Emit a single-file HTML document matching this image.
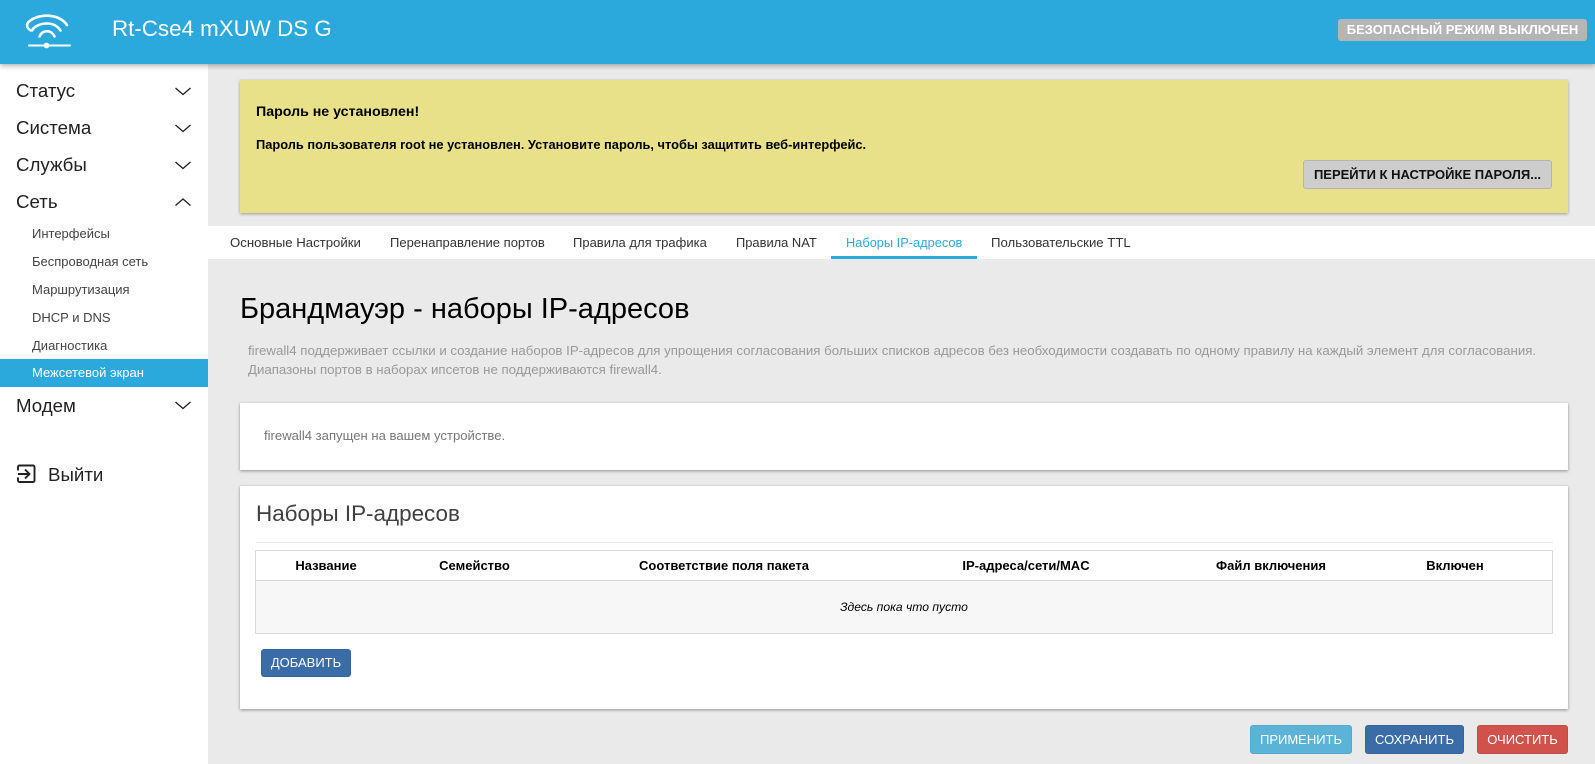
<!DOCTYPE html>
<html lang="ru"><head><meta charset="utf-8"><title>Брандмауэр</title>
<style>
*{box-sizing:border-box}
html,body{margin:0;padding:0}
body{width:1595px;height:764px;overflow:hidden;position:relative;background:#eaeaea;font-family:"Liberation Sans",Arial,sans-serif;color:#000}
.a{position:absolute;white-space:nowrap}
.c{transform:translateX(-50%)}
#hd{left:0;top:0;width:1595px;height:64px;background:#2ca9dc;box-shadow:0 2px 5px rgba(0,0,0,.3);z-index:3}
#sb{left:0;top:64px;width:208px;height:700px;background:#fff;z-index:1}
.m{left:16px;font-size:18.7px;line-height:22px;color:#222}
.s{left:32px;font-size:13px;line-height:18px;color:#444}
.card{background:#fff;box-shadow:0 1px 3px rgba(0,0,0,.4)}
.th{top:558px;font-size:13px;line-height:16px;font-weight:bold}
.b{border-radius:3px;font-size:13px;text-align:center;color:#fff;border:1px solid rgba(0,0,0,.06)}
.t{top:234px;font-size:13px;line-height:18px;color:#333}
</style></head><body>
<div id="hd" class="a"></div>
<svg class="a" style="left:24px;top:12px;z-index:4" width="48" height="38" viewBox="0 0 48 38" fill="none" stroke="#fff" stroke-linecap="round" stroke-linejoin="round">
<path d="M43 13C39 7 31 3.700 23 3.700C14 3.700 6.500 7 3.300 11.500C2.300 15 5 18.500 8 18.500C10.500 14 16.500 11.500 23 11.500C29 11.500 33.500 14 36.500 18.500" stroke-width="2.600"/>
<path d="M15.500 24.500C17 21 20 19.300 23 19.300C26 19.300 29 21 30.500 24.500" stroke-width="2.500"/>
<path d="M5 33.500H46" stroke-width="2"/>
<circle cx="22.500" cy="33.500" r="2.900" fill="#fff" stroke="none"/>
</svg>
<div class="a" style="left:112px;top:16px;font-size:22.350px;line-height:26px;color:#fff;z-index:4">Rt-Cse4 mXUW DS G</div>
<div class="a" style="left:1338px;top:19px;width:249px;height:22px;background:#b5b5b5;border-radius:3px;color:#fff;font-size:13px;font-weight:bold;line-height:22px;text-align:center;z-index:4">БЕЗОПАСНЫЙ РЕЖИМ ВЫКЛЮЧЕН</div>

<div id="sb" class="a"></div>
<div style="position:absolute;left:0;top:0;z-index:2">
<div class="a m" style="top:80px">Статус</div>
<div class="a m" style="top:117px">Система</div>
<div class="a m" style="top:154px">Службы</div>
<div class="a m" style="top:191px">Сеть</div>
<div class="a s" style="top:225px">Интерфейсы</div>
<div class="a s" style="top:253px">Беспроводная сеть</div>
<div class="a s" style="top:281px">Маршрутизация</div>
<div class="a s" style="top:309px">DHCP и DNS</div>
<div class="a s" style="top:337px">Диагностика</div>
<div class="a" style="left:0;top:359px;width:208px;height:28px;background:#2ca9dc"></div>
<div class="a s" style="top:364px;color:#fff">Межсетевой экран</div>
<div class="a m" style="top:395px">Модем</div>
<div class="a m" style="top:464px;left:48px">Выйти</div>
<svg class="a" style="left:0;top:0" width="208" height="500" fill="none" stroke="#222" stroke-width="1.300">
<path d="M175.500 88L183 94.500L190.500 88M175.500 125L183 131.500L190.500 125M175.500 162L183 168.500L190.500 162M175.500 205.500L183 199L190.500 205.500M175.500 402L183 408.500L190.500 402"/>
<path d="M18 470.500V467a1.500 1.500 0 0 1 1.500-1.500H33a1.500 1.500 0 0 1 1.500 1.500V480.500a1.500 1.500 0 0 1-1.500 1.500H19.500A1.500 1.500 0 0 1 18 480.500V477.500M18 474H29M25 469.500L29.500 474L25 478.500" stroke-width="1.900"/>
</svg>
</div>

<div class="a" style="left:240px;top:80px;width:1328px;height:133px;background:#e9e18a;box-shadow:0 1px 3px rgba(0,0,0,.35)"></div>
<div class="a" style="left:256px;top:103px;font-size:14.200px;line-height:18px;font-weight:bold">Пароль не установлен!</div>
<div class="a" style="left:256px;top:136px;font-size:12.850px;line-height:18px;font-weight:bold">Пароль пользователя root не установлен. Установите пароль, чтобы защитить веб-интерфейс.</div>
<div class="a b" style="left:1303px;top:160px;width:249px;height:29px;background:#cdcdcd;color:#111;font-weight:bold;line-height:27px;border-color:#b4b4b4">ПЕРЕЙТИ К НАСТРОЙКЕ ПАРОЛЯ...</div>

<div class="a" style="left:208px;top:226px;width:1387px;height:33px;background:#fff"></div>
<div class="a t" style="left:230px;font-size:13.200px">Основные Настройки</div>
<div class="a t" style="left:390px">Перенаправление портов</div>
<div class="a t" style="left:573px">Правила для трафика</div>
<div class="a t" style="left:736px;font-size:12.900px">Правила NAT</div>
<div class="a t" style="left:846px;font-size:12.800px;color:#2ca9dc">Наборы IP-адресов</div>
<div class="a" style="left:831px;top:256px;width:146px;height:3px;background:#2ca9dc"></div>
<div class="a t" style="left:991px;font-size:13.200px">Пользовательские TTL</div>

<div class="a" style="left:240px;top:292px;font-size:29px;line-height:34px">Брандмауэр - наборы IP-адресов</div>
<div class="a" style="left:248px;top:341px;font-size:13.250px;line-height:19px;color:#999">firewall4 поддерживает ссылки и создание наборов IP-адресов для упрощения согласования больших списков адресов без необходимости создавать по одному правилу на каждый элемент для согласования.<br>Диапазоны портов в наборах ипсетов не поддерживаются firewall4.</div>

<div class="a card" style="left:240px;top:403px;width:1328px;height:67px"></div>
<div class="a" style="left:264px;top:427px;font-size:13.100px;line-height:18px;color:#777">firewall4 запущен на вашем устройстве.</div>

<div class="a card" style="left:240px;top:486px;width:1328px;height:223px"></div>
<div class="a" style="left:256px;top:500px;font-size:22.450px;line-height:27px;color:#404040">Наборы IP-адресов</div>
<div class="a" style="left:256px;top:542px;width:1297px;height:1px;background:#e8e8e8"></div>
<div class="a" style="left:255px;top:550px;width:1298px;height:84px;border:1px solid #d9d9d9;background:#fff"></div>
<div class="a" style="left:256px;top:580px;width:1296px;height:53px;background:#f7f7f7;border-top:1px solid #d9d9d9"></div>
<div class="a th c" style="left:326px">Название</div>
<div class="a th c" style="left:474.500px">Семейство</div>
<div class="a th c" style="left:724px">Соответствие поля пакета</div>
<div class="a th c" style="left:1026px">IP-адреса/сети/MAC</div>
<div class="a th c" style="left:1271px">Файл включения</div>
<div class="a th c" style="left:1455px">Включен</div>
<div class="a c" style="left:904px;top:599px;font-size:12.150px;line-height:16px;font-style:italic">Здесь пока что пусто</div>
<div class="a b" style="left:261px;top:649px;width:90px;height:28px;line-height:26px;background:#3a6ca8">ДОБАВИТЬ</div>

<div class="a b" style="left:1250px;top:725px;width:102px;height:29px;line-height:27px;background:#5bb4d8">ПРИМЕНИТЬ</div>
<div class="a b" style="left:1365px;top:725px;width:99px;height:29px;line-height:27px;background:#3a6ca8">СОХРАНИТЬ</div>
<div class="a b" style="left:1477px;top:725px;width:91px;height:29px;line-height:27px;background:#d0524a">ОЧИСТИТЬ</div>
</body></html>
